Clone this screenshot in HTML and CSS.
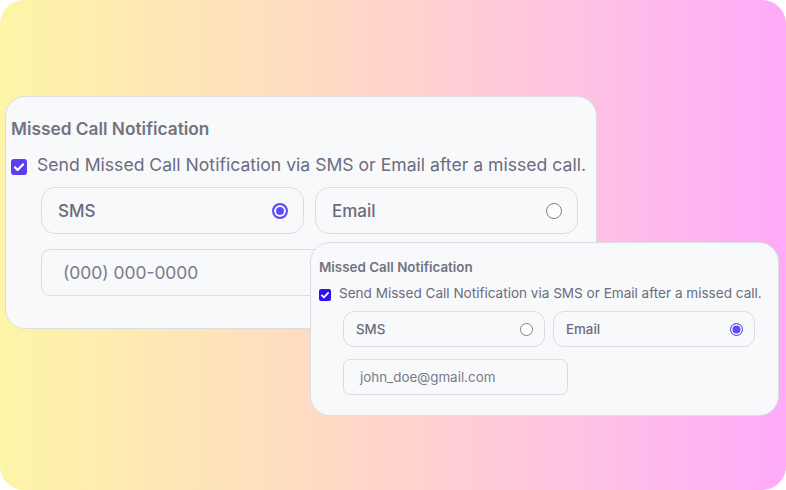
FILE: index.html
```html
<!DOCTYPE html>
<html lang="en">
<head>
<meta charset="utf-8">
<title>Missed Call Notification</title>
<link rel="stylesheet" href="styles.css">
</head>
<body>
<div class="canvas">
  <section class="card card-lg">
    <h2 class="title">Missed Call Notification</h2>
    <label class="check-row">
      <span class="checkbox"><svg viewBox="0 0 16 16"><path d="M4 8.4l2.6 2.6L12 5.4" fill="none" stroke="#fff" stroke-width="2.2" stroke-linecap="round" stroke-linejoin="round"/></svg></span>
      <span class="check-text">Send Missed Call Notification via SMS or Email after a missed call.</span>
    </label>
    <div class="options">
      <div class="choice"><span class="choice-label">SMS</span><span class="radio on"></span></div>
      <div class="choice"><span class="choice-label">Email</span><span class="radio"></span></div>
    </div>
    <div class="field"><span class="placeholder">(000) 000-0000</span></div>
  </section>

  <section class="card card-sm">
    <h2 class="title">Missed Call Notification</h2>
    <label class="check-row">
      <span class="checkbox"><svg viewBox="0 0 16 16"><path d="M3.8 8.6l2.8 2.7L12.2 5.2" fill="none" stroke="#fff" stroke-width="2.4" stroke-linecap="round" stroke-linejoin="round"/></svg></span>
      <span class="check-text">Send Missed Call Notification via SMS or Email after a missed call.</span>
    </label>
    <div class="options">
      <div class="choice"><span class="choice-label">SMS</span><span class="radio"></span></div>
      <div class="choice"><span class="choice-label">Email</span><span class="radio on"></span></div>
    </div>
    <div class="field"><span class="value">john_doe@gmail.com</span></div>
  </section>
</div>
</body>
</html>
```

FILE: styles.css
```css
* { box-sizing: border-box; }
html, body { margin: 0; padding: 0; background: #ffffff; }
body { font-family: Inter, "Noto Sans", sans-serif; }

.canvas {
  position: relative;
  width: 786px;
  height: 490px;
  border-radius: 24px;
  overflow: hidden;
  background: linear-gradient(90deg, #fef5a7 0%, #fee5b8 25%, #ffd5c9 48%, #ffc4e2 72%, #fdaaf9 100%);
}

.card {
  position: absolute;
  background: #f8f9fb;
  border: 1px solid #dcdde3;
  border-radius: 20px;
  color: #6c6c7e;
}

.title { margin: 0; font-weight: 600; color: #73737f; }

.check-row { display: flex; align-items: flex-start; }
.checkbox { flex: none; display: flex; border-radius: 3px; }
.checkbox svg { width: 100%; height: 100%; display: block; }

.options { display: flex; }
.choice {
  display: flex;
  align-items: center;
  justify-content: space-between;
  border: 1px solid #dcdde3;
  background: #f8f9fb;
}
.choice-label { font-weight: 500; color: #6b6b7c; }

.radio {
  flex: none;
  border-radius: 50%;
  background: #ffffff;
  border: 1.5px solid #7e7e86;
}
.radio.on {
  border: 2px solid #5b4cf5;
  background: #5b4cf5;
  box-shadow: inset 0 0 0 2px #ffffff;
}

.field {
  display: flex;
  align-items: center;
  border: 1px solid #dcdde3;
  background: #f8f9fb;
}
.placeholder, .value { color: #7a7a88; }

/* large card */
.card-lg { left: 5px; top: 96px; width: 592px; height: 233px; padding: 21px 0 0 5px; }
.card-lg .title { font-size: 17.3px; line-height: 21px; }
.card-lg .check-row { margin-top: 14px; gap: 10px; }
.card-lg .checkbox { width: 16px; height: 16px; margin-top: 6px; background: #5a3ef0; }
.card-lg .check-text { font-size: 17.6px; line-height: 24px; }
.card-lg .options { margin: 10px 0 0 30px; gap: 11px; }
.card-lg .choice { width: 263px; height: 47px; border-radius: 14px; padding: 0 15px 0 16px; }
.card-lg .choice-label { font-size: 17px; }
.card-lg .radio { width: 16px; height: 16px; }
.card-lg .field { margin: 15px 0 0 30px; width: 291px; height: 47px; border-radius: 9px; padding-left: 21px; }
.card-lg .placeholder { font-size: 17.4px; }

/* small card */
.card-sm { left: 310px; top: 242px; width: 469px; height: 174px; padding: 16px 0 0 8px; }
.card-sm .title { font-size: 13.4px; line-height: 16px; }
.card-sm .check-row { margin-top: 9px; gap: 8px; }
.card-sm .checkbox { width: 12px; height: 12px; margin-top: 5px; background: #2f10f2; border-radius: 2px; }
.card-sm .check-text { font-size: 13.55px; line-height: 18px; }
.card-sm .options { margin: 9px 0 0 24px; gap: 8px; }
.card-sm .choice { width: 202px; height: 36px; border-radius: 11px; padding: 0 11px 0 12px; }
.card-sm .choice-label { font-size: 13.3px; }
.card-sm .radio { width: 13px; height: 13px; }
.card-sm .radio.on { border-width: 1.5px; box-shadow: inset 0 0 0 1.5px #ffffff; }
.card-sm .field { margin: 12px 0 0 24px; width: 225px; height: 36px; border-radius: 7px; padding-left: 16px; }
.card-sm .value { font-size: 13.4px; }
```
